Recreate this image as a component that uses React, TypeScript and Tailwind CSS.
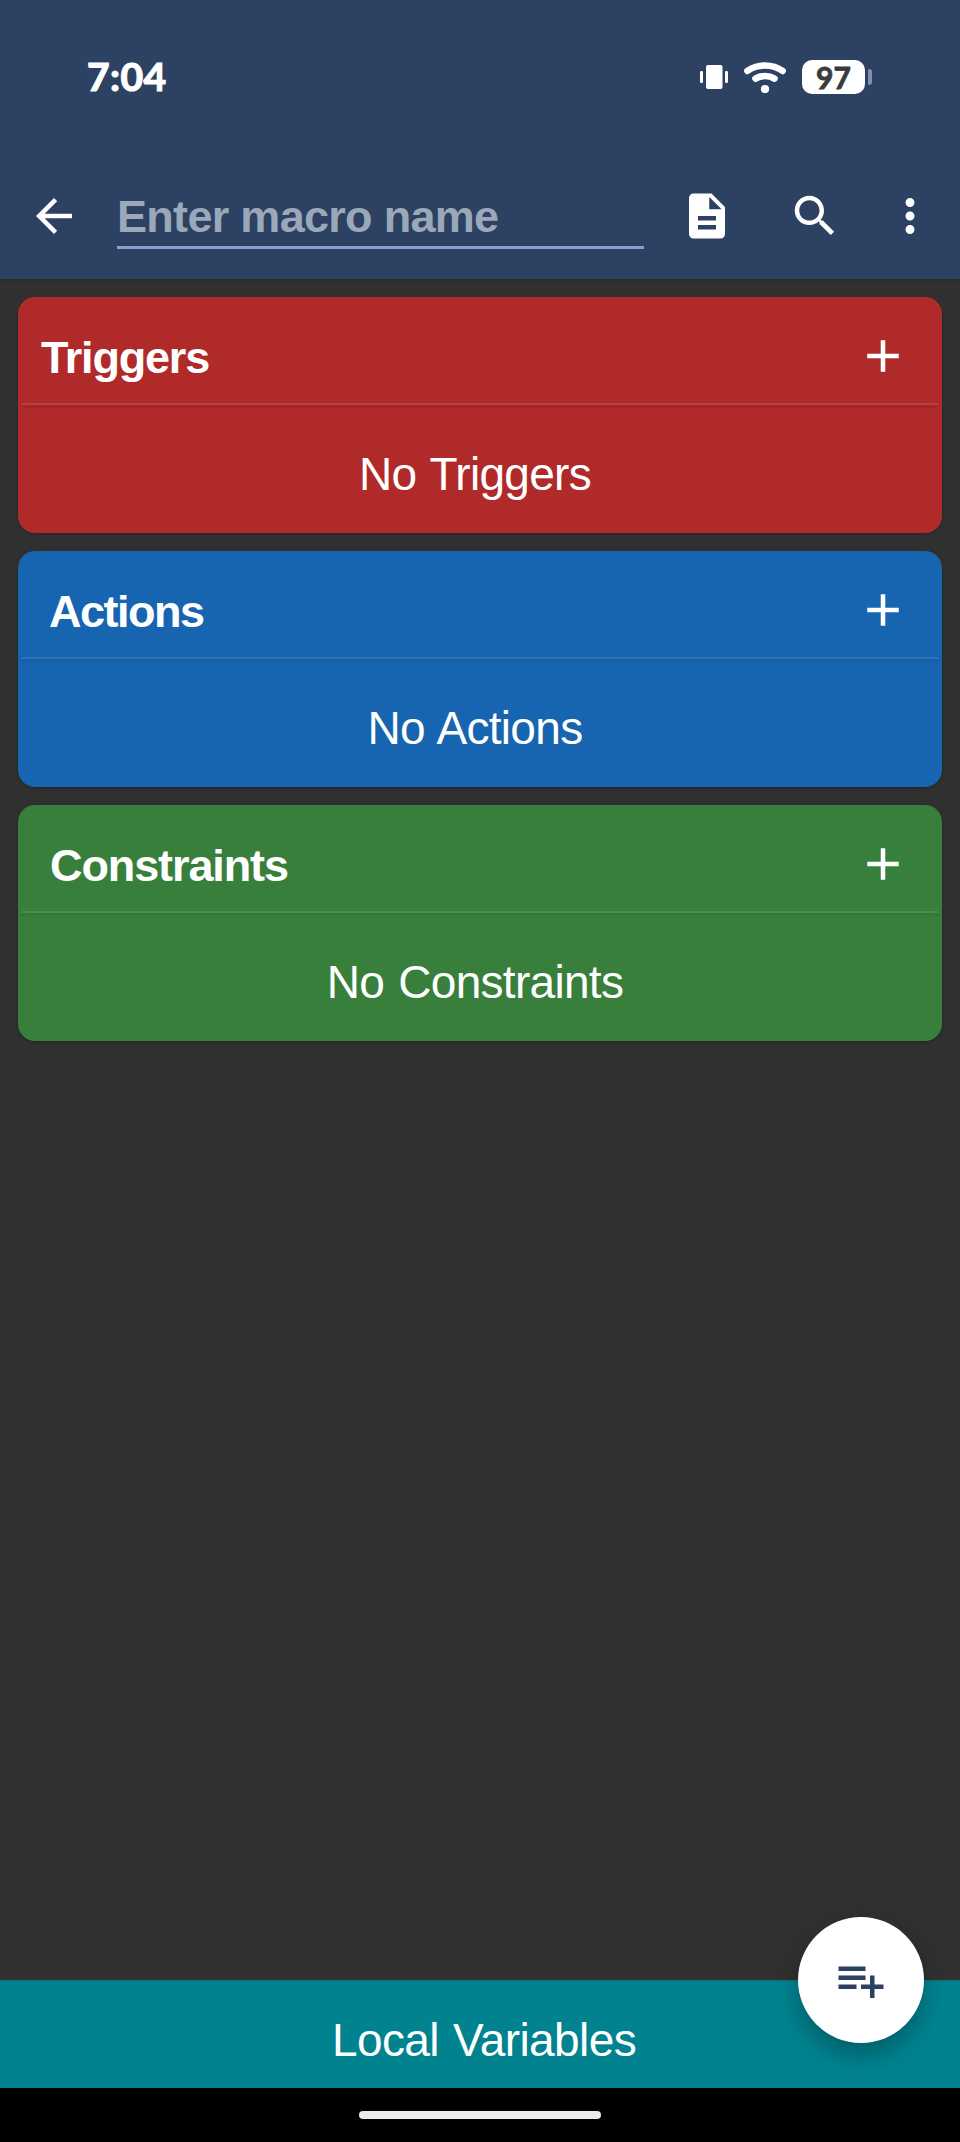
import React from "react";

const sans = "font-['Liberation_Sans',Arial,sans-serif]";

function Icon({ d, className = "" }: { d: string; className?: string }) {
  return (
    <svg viewBox="0 0 24 24" className={`block size-[54px] shrink-0 ${className}`} fill="currentColor" aria-hidden="true">
      <path d={d} />
    </svg>
  );
}

const icons = {
  back: "M20 11H7.83l5.59-5.59L12 4l-8 8 8 8 1.41-1.41L7.83 13H20v-2z",
  document:
    "M14 2H6c-1.1 0-1.99.9-1.99 2L4 20c0 1.1.89 2 1.99 2H18c1.1 0 2-.9 2-2V8l-6-6zm2 16H8v-2h8v2zm0-4H8v-2h8v2zm-3-5V3.5L18.5 9H13z",
  search:
    "M15.5 14h-.79l-.28-.27C15.41 12.59 16 11.11 16 9.5 16 5.91 13.09 3 9.5 3S3 5.91 3 9.5 5.91 16 9.5 16c1.61 0 3.09-.59 4.23-1.57l.27.28v.79l5 4.99L20.49 19l-4.99-5zm-6 0C7.01 14 5 11.99 5 9.5S7.01 5 9.5 5 14 7.01 14 9.5 11.99 14 9.5 14z",
  more: "M12 8c1.1 0 2-.9 2-2s-.9-2-2-2-2 .9-2 2 .9 2 2 2zm0 2c-1.1 0-2 .9-2 2s.9 2 2 2 2-.9 2-2-.9-2-2-2zm0 6c-1.1 0-2 .9-2 2s.9 2 2 2 2-.9 2-2-.9-2-2-2z",
  add: "M19 13h-6v6h-2v-6H5v-2h6V5h2v6h6v2z",
  playlistAdd:
    "M14 10H2v2h12v-2zm0-4H2v2h12V6zm4 8v-4h-2v4h-4v2h4v4h2v-4h4v-2h-4zM2 16h8v-2H2v2z",
};

function StatusBar() {
  return (
    <div className="flex h-[154px] items-start pl-[87px] pr-[88px] pt-[60px] text-white">
      <span className="mt-[-3px] font-['Lato',sans-serif] text-[39px] font-bold leading-[38px] tracking-[0.4px] [-webkit-text-stroke:1.2px_white] [stroke-linejoin:round]">
        7:04
      </span>
      <svg className="ml-auto mt-[5px] h-6 w-7 shrink-0" viewBox="0 0 28 24" fill="currentColor" aria-hidden="true">
        <rect x="6" y="0" width="16.5" height="24" rx="2" />
        <rect x="0" y="6" width="3" height="12" rx="1.2" />
        <rect x="25" y="6" width="3" height="12" rx="1.2" />
      </svg>
      <svg className="ml-4 mt-[1px] h-8 w-[42px] shrink-0" viewBox="0 0 42 32" fill="none" stroke="currentColor" strokeLinecap="round" aria-hidden="true">
        <path d="M3.4 9.9C13.5 2.7 28.5 2.7 38.6 9.9" strokeWidth="6.6" />
        <path d="M11.5 17.6C17 14.2 25 14.2 30.5 17.6" strokeWidth="6.6" />
        <circle cx="21" cy="28" r="4.1" fill="currentColor" stroke="none" />
      </svg>
      <div className="ml-4 flex h-[34px] w-[63px] items-center justify-center rounded-[10px] bg-white">
        <span className="font-['Lato',sans-serif] text-[30px] font-bold leading-[34px] text-[#3b3b3b] [-webkit-text-stroke:0.8px_#3b3b3b]">
          97
        </span>
      </div>
      <div className="ml-[3px] mt-[9px] h-4 w-1 rounded-r-[3px] rounded-l-[1px] bg-[#8390a7]" />
    </div>
  );
}

function Toolbar() {
  return (
    <div className="flex h-[125px] items-start pl-[27px] pr-[23px] pt-[35px] text-white">
      <Icon d={icons.back} />
      <div className="ml-9 mt-[4px] h-[56px] w-[527px] border-b-[3px] border-[#919dd0]">
        <div className="whitespace-nowrap text-[45px] font-bold leading-[48px] tracking-[-0.7px] text-[#9aa8b9]">
          Enter macro name
        </div>
      </div>
      <Icon d={icons.document} className="ml-9" />
      <Icon d={icons.search} className="ml-[54px]" />
      <Icon d={icons.more} className="ml-auto" />
    </div>
  );
}

type CardProps = { title: string; empty: string; color: string; titleClass: string };

function Card({ title, empty, color, titleClass }: CardProps) {
  return (
    <section className={`flex h-[236px] flex-col rounded-[17px] px-1 text-white shadow-[0_1px_3px_rgba(0,0,0,0.25)] ${color}`}>
      <div className="flex h-[106px] items-start justify-between pr-7 pt-8">
        <h2 className={`mt-[-3px] text-[45px] font-bold leading-[64px] ${titleClass}`}>{title}</h2>
        <Icon d={icons.add} />
      </div>
      <div className="h-[2px] bg-white/10 shadow-[0_2px_3px_rgba(0,0,0,0.15)]" />
      <p className="mt-[46px] pr-[10px] text-center text-[46px] leading-[46px] tracking-[-0.7px] [word-spacing:2px]">{empty}</p>
    </section>
  );
}

const cards: CardProps[] = [
  { title: "Triggers", empty: "No Triggers", color: "bg-[#b02a2a]", titleClass: "pl-[19px] tracking-[-1.2px]" },
  { title: "Actions", empty: "No Actions", color: "bg-[#1765b0]", titleClass: "pl-[27px] tracking-[-1.5px]" },
  { title: "Constraints", empty: "No Constraints", color: "bg-[#397f3c]", titleClass: "pl-[28px] tracking-[-1.1px]" },
];

export default function App() {
  return (
    <div className={`flex h-[2142px] w-[960px] flex-col overflow-hidden bg-[#303030] ${sans}`}>
      <header className="h-[279px] shrink-0 bg-[#2d4162] shadow-[0_1px_4px_rgba(0,0,0,0.15)]">
        <StatusBar />
        <Toolbar />
      </header>
      <main className="flex flex-1 flex-col gap-[18px] px-[18px] pt-[18px]">
        {cards.map((card) => (
          <Card key={card.title} {...card} />
        ))}
      </main>
      <footer className="relative shrink-0">
        <div className="flex h-[108px] items-start justify-center border-t-2 border-[#0f7780] bg-[#00838f] pl-[8px] pt-[35px] text-white">
          <span className="text-[46px] leading-[46px] tracking-[-0.6px] [word-spacing:2px]">Local Variables</span>
        </div>
        <div className="flex h-[54px] justify-center bg-black pt-[23px]">
          <div className="h-2 w-[242px] rounded-full bg-[#ececec]" />
        </div>
        <button
          aria-label="Add"
          className="absolute right-9 top-[-63px] flex size-[126px] items-center justify-center rounded-full bg-white text-[#2d4162] shadow-[0_12px_24px_rgba(0,0,0,0.28)]"
        >
          <Icon d={icons.playlistAdd} />
        </button>
      </footer>
    </div>
  );
}
